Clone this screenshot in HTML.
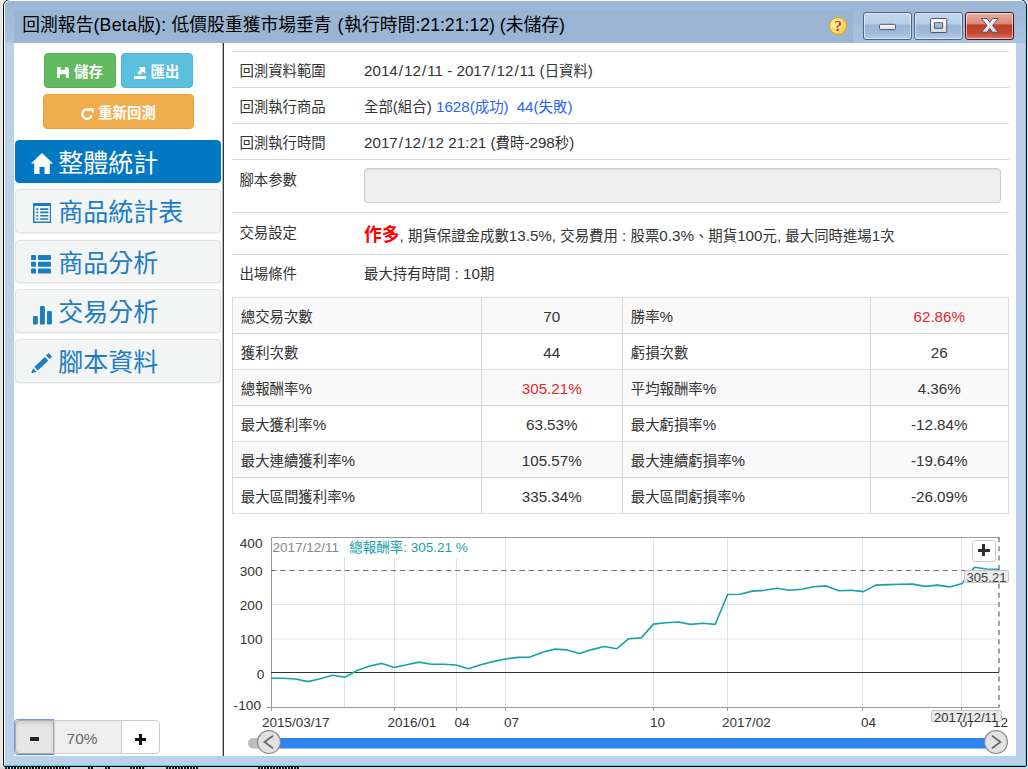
<!DOCTYPE html><html><head><meta charset="utf-8"><title>backtest report</title><style>
*{box-sizing:border-box;margin:0;padding:0}
html,body{width:1028px;height:769px;overflow:hidden}
body{background:#e6e6e6;font-family:"Liberation Sans","Noto Sans CJK TC",sans-serif;font-size:14.4px;color:#333;position:relative}
.c{display:inline}
.l{font-size:1.055em}
.s{padding:0 1px}
.tl{letter-spacing:.25px}
.a{position:absolute}
#win{left:3px;top:-1px;width:1024px;height:768px;border:1px solid #050505;border-radius:7px 7px 2px 2px;background:#bbd1ea;overflow:hidden}
#hl{left:0;top:0;right:0;bottom:0;border:1px solid;border-color:#fff #5fd8f2 #43d4f0 #fff;border-radius:6px 6px 1px 1px}
#tb{left:1px;top:1px;width:1020px;height:42px;background:linear-gradient(#9cb7d6,#a8c3e0)}
#ts{left:10px;top:10px;width:839px;height:33px;background:#9ab5d4}
#title{left:22.3px;top:10px;height:33px;line-height:30px;font-size:17.8px;color:#000;white-space:nowrap}
#content{left:14px;top:43px;width:1002px;height:713px;background:#fff}
#sep{left:222px;top:43px;width:2px;height:713px;background:linear-gradient(90deg,rgba(51,51,51,.35) 0 1px,#333 1px 2px)}
.btn{border-radius:4px;color:#fff;font-weight:bold;text-align:center;font-size:14.4px;line-height:36.5px;border:1px solid;white-space:nowrap}
.nav{left:15px;width:206px;height:43.5px;border-radius:4px;background:#f3f4f4;border:1px solid #e2e2e2;color:#1b7dc4;font-size:25px;line-height:42px;white-space:nowrap;box-shadow:0 1px 1px rgba(0,0,0,.05)}
.nav.on{background:#0378c2;border-color:#0378c2;color:#fff}
.nav .ic{position:absolute;left:16px;top:0}
.nav .tx{position:absolute;left:42.2px;top:1px}
.hr{left:232px;width:777px;height:1px;background:#d6d6d6}
.lab{left:239.4px;white-space:nowrap;line-height:20px}
.val{left:364px;white-space:nowrap;line-height:20px}
.blue{color:#2b62fb}
table{position:absolute;left:232px;top:296.5px;width:775.5px;border-collapse:collapse;table-layout:fixed}
td{border:1px solid #dadada;height:36px;padding:4.5px 0 0 7.8px;vertical-align:middle;white-space:nowrap;line-height:20px}
td.n{text-align:center;padding:4.5px 0 0 0}
tr:nth-child(odd) td{background:#f9f9f9}
.red{color:#e8262a}
.yl{width:60px;text-align:right;font-size:13.7px;line-height:14px;color:#333}
.xl{font-size:13.5px;line-height:14px;color:#333;white-space:nowrap;top:715.6px}
</style></head><body><div class="a" style="left:0;top:767px;width:1028px;height:2px;background:#d6d6d6"></div><div class="a" style="left:5px;top:767px;width:65px;height:2px;background:repeating-linear-gradient(90deg,#222 0 2px,#bbb 2px 3px,#111 3px 5px,#eee 5px 6px)"></div><div class="a" style="left:88px;top:767px;width:5px;height:2px;background:repeating-linear-gradient(90deg,#222 0 2px,#bbb 2px 3px,#111 3px 5px,#eee 5px 6px)"></div><div class="a" style="left:105px;top:767px;width:5px;height:2px;background:repeating-linear-gradient(90deg,#222 0 2px,#bbb 2px 3px,#111 3px 5px,#eee 5px 6px)"></div><div class="a" style="left:130px;top:767px;width:15px;height:2px;background:repeating-linear-gradient(90deg,#222 0 2px,#bbb 2px 3px,#111 3px 5px,#eee 5px 6px)"></div><div class="a" style="left:166px;top:767px;width:33px;height:2px;background:repeating-linear-gradient(90deg,#222 0 2px,#bbb 2px 3px,#111 3px 5px,#eee 5px 6px)"></div><div class="a" style="left:258px;top:767px;width:42px;height:2px;background:repeating-linear-gradient(90deg,#222 0 2px,#bbb 2px 3px,#111 3px 5px,#eee 5px 6px)"></div><div class="a" style="left:2px;top:0;width:1px;height:767px;background:#f2f2f2"></div><div id="win" class="a"><div id="tb" class="a"></div><div id="ts" class="a"></div><div id="hl" class="a"></div></div><div id="title" class="a"><span class="c">回測報告</span><span class="tl">(Beta</span><span class="c">版</span><span class="tl">): </span><span class="c">低價股重獲市場垂青</span><span style="letter-spacing:.9px"> (</span><span class="c">執行時間</span><span style="letter-spacing:-.05px">:21:21:12) (</span><span class="c">未儲存</span>)</div><svg class="a" style="left:828px;top:16px" width="20" height="20" viewBox="0 0 20 20"><defs><radialGradient id="hg" cx="40%" cy="35%" r="70%"><stop offset="0" stop-color="#fff6b0"/><stop offset="1" stop-color="#f5c63a"/></radialGradient></defs><circle cx="10" cy="10" r="8.6" fill="url(#hg)" stroke="#d9a521" stroke-width="1"/><text x="10.2" y="15.3" text-anchor="middle" style="font-family:'Liberation Serif',serif" font-weight="bold" font-size="15.5" fill="#d8351c">?</text></svg><div class="a" style="left:863px;top:12px;width:49px;height:28px;border:1px solid #536179;border-radius:3px;background:linear-gradient(#c2d5eb 0%,#b9cfe8 43%,#9cb6d6 45%,#a0bad9 78%,#b6cde7 100%);box-shadow:inset 0 0 0 1px rgba(255,255,255,.55)"></div><div class="a" style="left:914px;top:12px;width:49px;height:28px;border:1px solid #536179;border-radius:3px;background:linear-gradient(#c2d5eb 0%,#b9cfe8 43%,#9cb6d6 45%,#a0bad9 78%,#b6cde7 100%);box-shadow:inset 0 0 0 1px rgba(255,255,255,.55)"></div><div class="a" style="left:965px;top:12px;width:49px;height:28px;border:1px solid #47141f;border-radius:3px;background:linear-gradient(#e8b0a4 0%,#da8775 43%,#bf4129 45%,#c4482f 78%,#d67b66 100%);box-shadow:inset 0 0 0 1px rgba(255,255,255,.55)"></div><svg class="a" style="left:863px;top:12px" width="152" height="28" viewBox="0 0 152 28"><defs><linearGradient id="gg" x1="0" y1="0" x2="0" y2="1"><stop offset="0" stop-color="#fff"/><stop offset="1" stop-color="#d9d9d9"/></linearGradient></defs><rect x="16.5" y="12.3" width="16" height="5.4" rx="1.2" fill="url(#gg)" stroke="#4d566c" stroke-width="1"/><path fill-rule="evenodd" d="M68.5 6.5h14.3a1 1 0 0 1 1 1v12a1 1 0 0 1-1 1H68.5a1 1 0 0 1-1-1v-12a1 1 0 0 1 1-1zM71.4 10.8v5.5h8.2v-5.5z" fill="url(#gg)" stroke="#4d566c" stroke-width="1"/><path d="M118.5 6.5h5.6l2.7 3.9 2.7-3.9h5.6l-5.5 6.9 5.5 6.9h-5.6l-2.7-3.9-2.7 3.9h-5.6l5.5-6.9z" fill="url(#gg)" stroke="#50566e" stroke-width="1" stroke-linejoin="round"/></svg><div id="content" class="a"></div><div id="sep" class="a"></div><div class="a btn" style="left:44px;top:53.2px;width:72px;height:34.5px;background:#62ba60;border-color:#55b053"><svg width="12" height="11" viewBox="0 0 12 11" style="vertical-align:-0.5px;margin-right:5px"><path fill="#fff" d="M0 0h3.8v2.7h4.4V0h1.9L12 1.8V11H9.1V7.3H2.9V11H0z"/></svg><span class="c">儲存</span></div><div class="a btn" style="left:120.5px;top:53.2px;width:72px;height:34.5px;background:#5bc0de;border-color:#46b8da"><svg width="12" height="12" viewBox="0 0 12 12" style="vertical-align:-1.5px;margin-right:5px"><path fill="#fff" d="M4.5 0h6.7v6.7L9 4.5 5.6 7.9 3.4 5.7 6.8 2.3zM0 9h12v3H0z"/></svg><span class="c">匯出</span></div><div class="a btn" style="left:43px;top:94.2px;width:151px;height:34.5px;background:#f0ad4e;border-color:#eea236"><svg width="13" height="12" viewBox="0 0 13 12" style="vertical-align:-1.5px;margin-right:4px"><path fill="none" stroke="#fff" stroke-width="2.3" d="M10.6 7.2A4.7 4.7 0 1 1 9.3 2.7"/><path fill="#fff" d="M7 0.3 12.6 0v5.6z"/></svg><span class="c">重新回測</span></div><div class="a nav on" style="top:139.8px"><span class="ic" style="left:15px;top:12px;line-height:0"><svg width="22" height="21" viewBox="0 0 22 21"><path fill="currentColor" d="M11 0 22 10.5h-3.2V21h-5.3v-7h-5v7H3.2V10.5H0z"/></svg></span><span class="tx"><span class="c">整體統計</span></span></div><div class="a nav" style="top:189.3px"><span class="ic" style="left:16.799999999999997px;top:12.5px;line-height:0"><svg width="18.4" height="20.2" viewBox="0 0 18.4 20.2"><path fill="currentColor" fill-rule="evenodd" d="M0 0h18.4v20.2H0zM1.5 3v15.5h15.4V3z"/><path fill="currentColor" d="M3.3 5.3h1.9v1.6h-1.9zM7.2 5.3h8.1v1.6h-8.1zM3.3 8.6h1.9v1.6h-1.9zM7.2 8.6h8.1v1.6h-8.1zM3.3 11.9h1.9v1.6h-1.9zM7.2 11.9h8.1v1.6h-8.1zM3.3 15.2h1.9v1.6h-1.9zM7.2 15.2h8.1v1.6h-8.1z"/></svg></span><span class="tx"><span class="c">商品統計表</span></span></div><div class="a nav" style="top:239.6px"><span class="ic" style="left:15.2px;top:14px;line-height:0"><svg width="20" height="19" viewBox="0 0 20 19"><g fill="currentColor"><rect x="0" y="0" width="5" height="5" rx=".8"/><rect x="7" y="0" width="13" height="5" rx=".8"/><rect x="0" y="6.8" width="5" height="5" rx=".8"/><rect x="7" y="6.8" width="13" height="5" rx=".8"/><rect x="0" y="13.6" width="5" height="5" rx=".8"/><rect x="7" y="13.6" width="13" height="5" rx=".8"/></g></svg></span><span class="tx"><span class="c">商品分析</span></span></div><div class="a nav" style="top:289.2px"><span class="ic" style="left:16.799999999999997px;top:15.399999999999999px;line-height:0"><svg width="19" height="19" viewBox="0 0 19 19"><g fill="currentColor"><rect x="0" y="10" width="4.8" height="8.6" rx=".8"/><rect x="7" y="0" width="4.9" height="18.6" rx="1.2"/><rect x="14" y="5" width="4.9" height="13.6" rx="1"/></g></svg></span><span class="tx"><span class="c">交易分析</span></span></div><div class="a nav" style="top:339.2px"><span class="ic" style="left:14.8px;top:12.4px;line-height:0"><svg width="21" height="20.6" viewBox="0 0 21 20.6"><path fill="currentColor" d="M17.7 0 21 3.5 18.4 5.9 15 2.6zM13.8 3.9 17.3 7.4 6.8 17.5 3.3 14zM2.1 15.2 5.6 18.7 0 20.6z"/></svg></span><span class="tx"><span class="c">腳本資料</span></span></div><div class="a" style="left:15px;top:720px;width:145px;height:34px;border:1px solid #ccc;border-radius:4px;background:#fff"></div><div class="a" style="left:15px;top:720px;width:39px;height:34px;border:1px solid #adadad;border-radius:4px 0 0 4px;background:#e6e6e6;box-shadow:inset 0 2px 4px rgba(0,0,0,.12)"></div><div class="a" style="left:14px;top:719px;width:40px;height:36px;border:1px solid #6fa0e8;border-right:none;border-radius:4px 0 0 4px;border-bottom-color:#4a86e0"></div><div class="a" style="left:53.5px;top:720px;width:68px;height:34px;border:1px solid #ccc;background:#eee;text-align:center;padding-right:11px;line-height:35px;font-size:15.4px;color:#666">70%</div><div class="a" style="left:30px;top:737px;width:9px;height:3.6px;background:#222"></div><div class="a" style="left:134.8px;top:737.6px;width:11.2px;height:3.4px;background:#111"></div><div class="a" style="left:138.7px;top:733.7px;width:3.4px;height:11.2px;background:#111"></div><div class="a hr" style="top:51px"></div><div class="a hr" style="top:87px"></div><div class="a hr" style="top:123px"></div><div class="a hr" style="top:159px"></div><div class="a hr" style="top:211.5px"></div><div class="a hr" style="top:254px"></div><div class="a lab" style="top:61px"><span class="c">回測資料範圍</span></div><div class="a val" style="top:61px"><span class="l">2014<span class="s">/</span>12<span class="s">/</span>11 - 2017<span class="s">/</span>12<span class="s">/</span>11 (</span><span class="c">日資料</span><span class="l">)</span></div><div class="a lab" style="top:97px"><span class="c">回測執行商品</span></div><div class="a val" style="top:97px"><span class="c">全部</span><span class="l">(</span><span class="c">組合</span><span class="l">) </span><span class="blue"><span class="l">1628(</span><span class="c">成功</span><span class="l">)</span>&nbsp; <span class="l">44(</span><span class="c">失敗</span><span class="l">)</span></span></div><div class="a lab" style="top:133px"><span class="c">回測執行時間</span></div><div class="a val" style="top:133px"><span class="l">2017<span class="s">/</span>12<span class="s">/</span>12 21:21 (</span><span class="c">費時</span><span class="l">-298</span><span class="c">秒</span><span class="l">)</span></div><div class="a lab" style="top:170px"><span class="c">腳本参數</span></div><div class="a lab" style="top:222.5px"><span class="c">交易設定</span></div><div class="a val" style="top:225.0px"><span style="color:#f00;font-size:17.8px;font-weight:bold"><span class="c">作多</span></span><span><span class="l">, </span><span class="c">期貨保證金成數</span><span class="l">13.5%, </span><span class="c">交易費用</span><span class="l"> : </span><span class="c">股票</span><span class="l">0.3%</span><span class="c">、期貨</span><span class="l">100</span><span class="c">元</span><span class="l">, </span><span class="c">最大同時進場</span><span class="l">1</span><span class="c">次</span></span></div><div class="a lab" style="top:263.5px"><span class="c">出場條件</span></div><div class="a val" style="top:263.5px"><span><span class="c">最大持有時間</span><span class="l"> : 10</span><span class="c">期</span></span></div><div class="a" style="left:364px;top:168px;width:637px;height:35px;background:#eee;border:1px solid #ccc;border-radius:4px;box-shadow:inset 0 1px 1px rgba(0,0,0,.075)"></div><table><colgroup><col style="width:248.5px"><col style="width:141.5px"><col style="width:248px"><col style="width:137.5px"></colgroup><tr><td><span class="c">總交易次數</span></td><td class="n "><span class="l">70</span></td><td><span class="c">勝率</span><span class="l">%</span></td><td class="n red"><span class="l">62.86%</span></td></tr><tr><td><span class="c">獲利次數</span></td><td class="n "><span class="l">44</span></td><td><span class="c">虧損次數</span></td><td class="n "><span class="l">26</span></td></tr><tr><td><span class="c">總報酬率</span><span class="l">%</span></td><td class="n red"><span class="l">305.21%</span></td><td><span class="c">平均報酬率</span><span class="l">%</span></td><td class="n "><span class="l">4.36%</span></td></tr><tr><td><span class="c">最大獲利率</span><span class="l">%</span></td><td class="n "><span class="l">63.53%</span></td><td><span class="c">最大虧損率</span><span class="l">%</span></td><td class="n "><span class="l">-12.84%</span></td></tr><tr><td><span class="c">最大連續獲利率</span><span class="l">%</span></td><td class="n "><span class="l">105.57%</span></td><td><span class="c">最大連續虧損率</span><span class="l">%</span></td><td class="n "><span class="l">-19.64%</span></td></tr><tr><td><span class="c">最大區間獲利率</span><span class="l">%</span></td><td class="n "><span class="l">335.34%</span></td><td><span class="c">最大區間虧損率</span><span class="l">%</span></td><td class="n "><span class="l">-26.09%</span></td></tr></table><svg class="a" style="left:0;top:0" width="1028" height="769" viewBox="0 0 1028 769"><line x1="271" x2="999" y1="604.5" y2="604.5" stroke="#e6e6e6" stroke-width="1"/><line x1="271" x2="999" y1="639" y2="639" stroke="#e6e6e6" stroke-width="1"/><line x1="344.5" x2="344.5" y1="538" y2="707" stroke="#d3e6f2" stroke-width="1"/><line x1="394.5" x2="394.5" y1="538" y2="707" stroke="#d3e6f2" stroke-width="1"/><line x1="456.5" x2="456.5" y1="538" y2="707" stroke="#d3e6f2" stroke-width="1"/><line x1="505.5" x2="505.5" y1="538" y2="707" stroke="#d3e6f2" stroke-width="1"/><line x1="653.5" x2="653.5" y1="538" y2="707" stroke="#d3e6f2" stroke-width="1"/><line x1="727.5" x2="727.5" y1="538" y2="707" stroke="#d3e6f2" stroke-width="1"/><line x1="862.5" x2="862.5" y1="538" y2="707" stroke="#d3e6f2" stroke-width="1"/><line x1="961.5" x2="961.5" y1="538" y2="707" stroke="#d3e6f2" stroke-width="1"/><line x1="394.5" x2="394.5" y1="707" y2="711" stroke="#999" stroke-width="1"/><line x1="456.5" x2="456.5" y1="707" y2="711" stroke="#999" stroke-width="1"/><line x1="505.5" x2="505.5" y1="707" y2="711" stroke="#999" stroke-width="1"/><line x1="653.5" x2="653.5" y1="707" y2="711" stroke="#999" stroke-width="1"/><line x1="727.5" x2="727.5" y1="707" y2="711" stroke="#999" stroke-width="1"/><line x1="862.5" x2="862.5" y1="707" y2="711" stroke="#999" stroke-width="1"/><line x1="961.5" x2="961.5" y1="707" y2="711" stroke="#999" stroke-width="1"/><rect x="272" y="538" width="196" height="20" fill="#fff"/><path d="M271.5 711V537.5H999" fill="none" stroke="#999" stroke-width="1"/><line x1="267" x2="999" y1="707.5" y2="707.5" stroke="#999" stroke-width="1"/><line x1="271" x2="999" y1="672.5" y2="672.5" stroke="#333" stroke-width="1.2"/><line x1="271" x2="999" y1="570.5" y2="570.5" stroke="#6a6f8c" stroke-width="1" stroke-dasharray="5.5 3.7"/><line x1="999" x2="999" y1="537" y2="707.5" stroke="#6a6f8c" stroke-width="1.3" stroke-dasharray="5 4.3"/><polyline points="270.9,678.2 283.2,678.2 295.6,679 307.9,681.6 320.3,678.7 332.6,675.3 345.0,677.2 357.3,670.4 369.6,666 382.0,663.4 394.3,667.5 406.7,664.7 419.0,662.1 431.4,664.2 443.7,664.2 456.0,665 468.4,668.8 480.7,664.7 493.1,661.6 505.4,659 517.8,657.4 530.1,657.1 542.4,652.2 554.8,649.1 567.1,649.9 579.5,653.5 591.8,649.6 604.2,646.5 616.5,648.8 628.8,638.7 641.2,637.9 653.5,624.1 665.9,622.8 678.2,622 690.6,624.4 702.9,623.3 715.2,624.4 727.6,594.5 739.9,594.2 752.3,591.1 764.6,590.3 777.0,588.2 789.3,590.3 801.6,589.3 814.0,586.7 826.3,585.9 838.7,590.8 851.0,590.3 863.4,591.6 875.7,585.1 888.0,584.6 900.4,584.3 912.7,584.1 925.1,586.4 937.4,585.1 949.8,586.9 962.1,583.6 974.5,567.3 986.8,569 999.1,569.2" fill="none" stroke="#17a2a8" stroke-width="1.6" stroke-linejoin="round"/><rect x="248" y="738" width="30" height="10.5" rx="5" fill="#bdbdbd"/><rect x="270" y="738" width="726" height="10.5" fill="#2b85f0"/><circle cx="269" cy="742.1" r="11.4" fill="#e2e2e2" stroke="#8a8a8a" stroke-width="1.2"/><path d="M273 735.8 264.5 742 273 748.2" fill="none" stroke="#666" stroke-width="1.7"/><circle cx="996" cy="742.1" r="11.4" fill="#e2e2e2" stroke="#8a8a8a" stroke-width="1.2"/><path d="M992 735.8 1000.5 742 992 748.2" fill="none" stroke="#666" stroke-width="1.7"/></svg><div class="a yl" style="top:537px;left:202.60000000000002px">400</div><div class="a yl" style="top:565.3px;left:202.60000000000002px">300</div><div class="a yl" style="top:599.3px;left:202.60000000000002px">200</div><div class="a yl" style="top:633.3px;left:202.60000000000002px">100</div><div class="a yl" style="top:667.8px;left:204.39999999999998px">0</div><div class="a yl" style="top:699.3px;left:201px">-100</div><div class="a xl" style="left:262px">2015/03/17</div><div class="a xl" style="left:387.5px">2016/01</div><div class="a xl" style="left:454.5px">04</div><div class="a xl" style="left:504px">07</div><div class="a xl" style="left:650px">10</div><div class="a xl" style="left:722px">2017/02</div><div class="a xl" style="left:861px">04</div><div class="a xl" style="left:959.8px">07</div><div class="a xl" style="left:993px">12</div><div class="a" style="left:272.5px;top:539.5px;font-size:13.5px;line-height:16px;color:#888;white-space:nowrap">2017/12/11</div><div class="a" style="left:349.3px;top:539.5px;font-size:13.5px;line-height:16px;color:#17a2a8;white-space:nowrap"><span class="c">總報酬率</span>: 305.21 %</div><div class="a" style="left:964.3px;top:570.4px;width:44.4px;height:12.5px;background:#ebebeb;border:1px solid #c4c4c4;border-radius:2px;font-size:13px;line-height:14.2px;color:#444;text-align:center">305.21</div><div class="a" style="left:930.5px;top:710px;width:71px;height:12.2px;background:#ebebeb;border:1px solid #c4c4c4;border-radius:2px;font-size:13px;line-height:14px;color:#333;text-align:center;white-space:nowrap">2017/12/11</div><div class="a" style="left:971.5px;top:540px;width:24.5px;height:21.5px;background:#fff;border:1px solid #ccc;border-radius:3px"></div><div class="a" style="left:978px;top:749.5px"></div><div class="a" style="left:977.8px;top:548.6px;width:12px;height:3px;background:#2e2e2e"></div><div class="a" style="left:982.3px;top:544.1px;width:3px;height:12px;background:#2e2e2e"></div></body></html>
